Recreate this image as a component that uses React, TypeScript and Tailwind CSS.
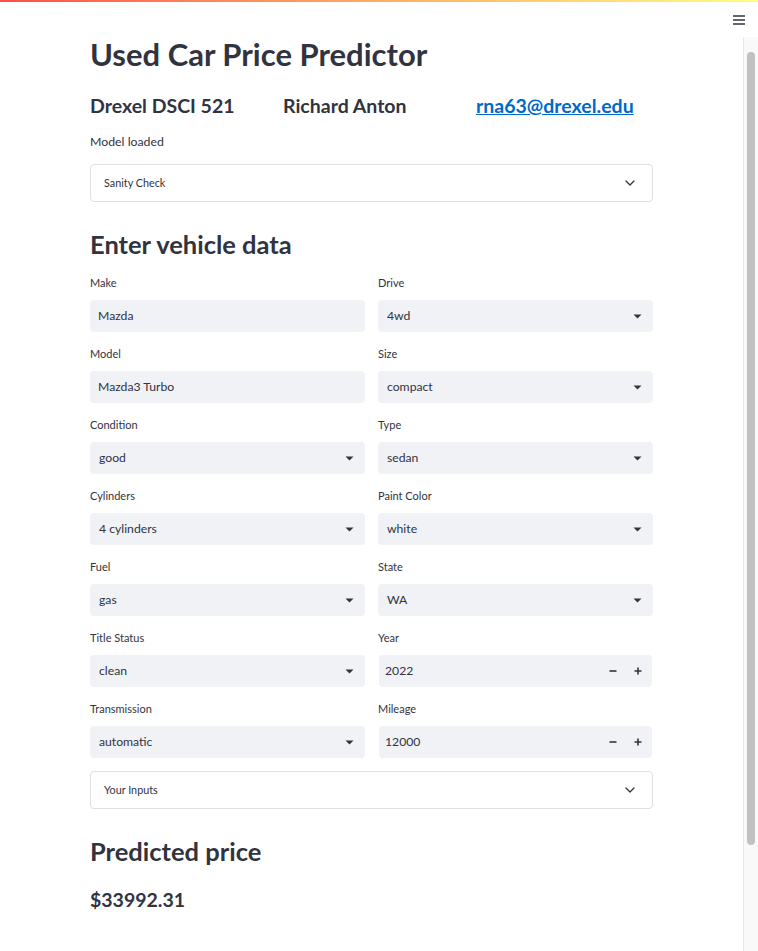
import React from "react";

const FONT = { fontFamily: "Lato, 'Noto Sans', sans-serif" };

function Chevron() {
  return (
    <svg width="10" height="6" viewBox="0 0 10 6" fill="none">
      <path d="M1 1l4 4 4-4" stroke="#31333f" strokeWidth="1.3" strokeLinecap="round" strokeLinejoin="round" />
    </svg>
  );
}

function Expander({ title }: { title: string }) {
  return (
    <div className="h-[38px] border border-[#dfe0e3] rounded-[4px] flex items-center justify-between pl-[13px] pr-[17px]">
      <span className="text-[10.8px] text-[#31333f]">{title}</span>
      <Chevron />
    </div>
  );
}

function Triangle() {
  return (
    <svg width="9" height="5" viewBox="0 0 9 5">
      <path d="M0.5 0.5h8L4.5 4.5z" fill="#31333f" />
    </svg>
  );
}

function Label({ children }: { children: React.ReactNode }) {
  return <div className="h-[16px] leading-[16px] text-[11px] text-[#31333f] mb-[9px]">{children}</div>;
}

function TextField({ label, value }: { label: string; value: string }) {
  return (
    <div>
      <Label>{label}</Label>
      <div className="h-[32px] bg-[#f0f2f6] rounded-[4px] flex items-center pl-[8px] text-[12.2px] text-[#31333f]">
        {value}
      </div>
    </div>
  );
}

function SelectField({ label, value }: { label: string; value: string }) {
  return (
    <div>
      <Label>{label}</Label>
      <div className="h-[32px] bg-[#f0f2f6] rounded-[4px] flex items-center justify-between pl-[9px] pr-[11px] text-[12.2px] text-[#31333f]">
        <span>{value}</span>
        <Triangle />
      </div>
    </div>
  );
}

function NumberField({ label, value }: { label: string; value: string }) {
  return (
    <div>
      <Label>{label}</Label>
      <div className="h-[32px] ml-[1px] mr-[1px] bg-[#f0f2f6] rounded-[4px] flex items-center pl-[6px] text-[12.2px] text-[#31333f]">
        <span className="flex-1">{value}</span>
        <div className="w-[25px] h-full flex items-center justify-center">
          <svg width="8" height="8" viewBox="0 0 8 8">
            <path d="M0.5 4h7" stroke="#31333f" strokeWidth="1.6" />
          </svg>
        </div>
        <div className="w-[25px] h-full flex items-center justify-center mr-[2px]">
          <svg width="8" height="8" viewBox="0 0 8 8">
            <path d="M0.5 4h7M4 0.5v7" stroke="#31333f" strokeWidth="1.6" />
          </svg>
        </div>
      </div>
    </div>
  );
}

export default function App() {
  return (
    <div className="w-[758px] h-[951px] bg-white overflow-hidden text-[#31333f]" style={FONT}>
      <div className="h-[2px] bg-gradient-to-r from-[#ff4b4b] to-[#fffd80]" />
      <div className="h-[35px] flex justify-end items-center pr-[13px]">
        <svg width="12" height="10" viewBox="0 0 12 10">
          <path d="M0 1h12M0 5h12M0 9h12" stroke="#31333f" strokeWidth="1.5" />
        </svg>
      </div>
      <div className="flex h-[914px]">
        <div className="flex-1">
          <div className="w-[563px] mx-auto">
            <h1 className="text-[31px] leading-[35px] font-bold">Used Car Price Predictor</h1>
            <div className="mt-[19px] grid grid-cols-3 gap-4 h-[28px] items-center text-[19.5px] font-bold">
              <div>Drexel DSCI 521</div>
              <div>Richard Anton</div>
              <div>
                <a className="text-[#0068c9] underline" href="#">rna63@drexel.edu</a>
              </div>
            </div>
            <div className="mt-[13px] h-[20px] leading-[20px] text-[12.3px]">Model loaded</div>
            <div className="mt-[12px]">
              <Expander title="Sanity Check" />
            </div>
            <h2 className="mt-[24px] h-[36px] leading-[36px] text-[25.5px] font-bold">Enter vehicle data</h2>
            <div className="mt-[13px] grid grid-cols-2 gap-x-[13px] gap-y-[14px]">
              <TextField label="Make" value="Mazda" />
              <SelectField label="Drive" value="4wd" />
              <TextField label="Model" value="Mazda3 Turbo" />
              <SelectField label="Size" value="compact" />
              <SelectField label="Condition" value="good" />
              <SelectField label="Type" value="sedan" />
              <SelectField label="Cylinders" value="4 cylinders" />
              <SelectField label="Paint Color" value="white" />
              <SelectField label="Fuel" value="gas" />
              <SelectField label="State" value="WA" />
              <SelectField label="Title Status" value="clean" />
              <NumberField label="Year" value="2022" />
              <SelectField label="Transmission" value="automatic" />
              <NumberField label="Mileage" value="12000" />
            </div>
            <div className="mt-[13px]">
              <Expander title="Your Inputs" />
            </div>
            <h2 className="mt-[24px] h-[36px] leading-[36px] text-[25.5px] font-bold">Predicted price</h2>
            <div className="mt-[17px] h-[28px] leading-[28px] text-[19.5px] font-bold">$33992.31</div>
          </div>
        </div>
        <div className="w-[15px] bg-[#f9f9f9] border-l border-[#e8e8e8] pt-[15px] flex justify-center">
          <div className="w-[8px] h-[793px] rounded-full bg-[#c1c1c1]" />
        </div>
      </div>
    </div>
  );
}
